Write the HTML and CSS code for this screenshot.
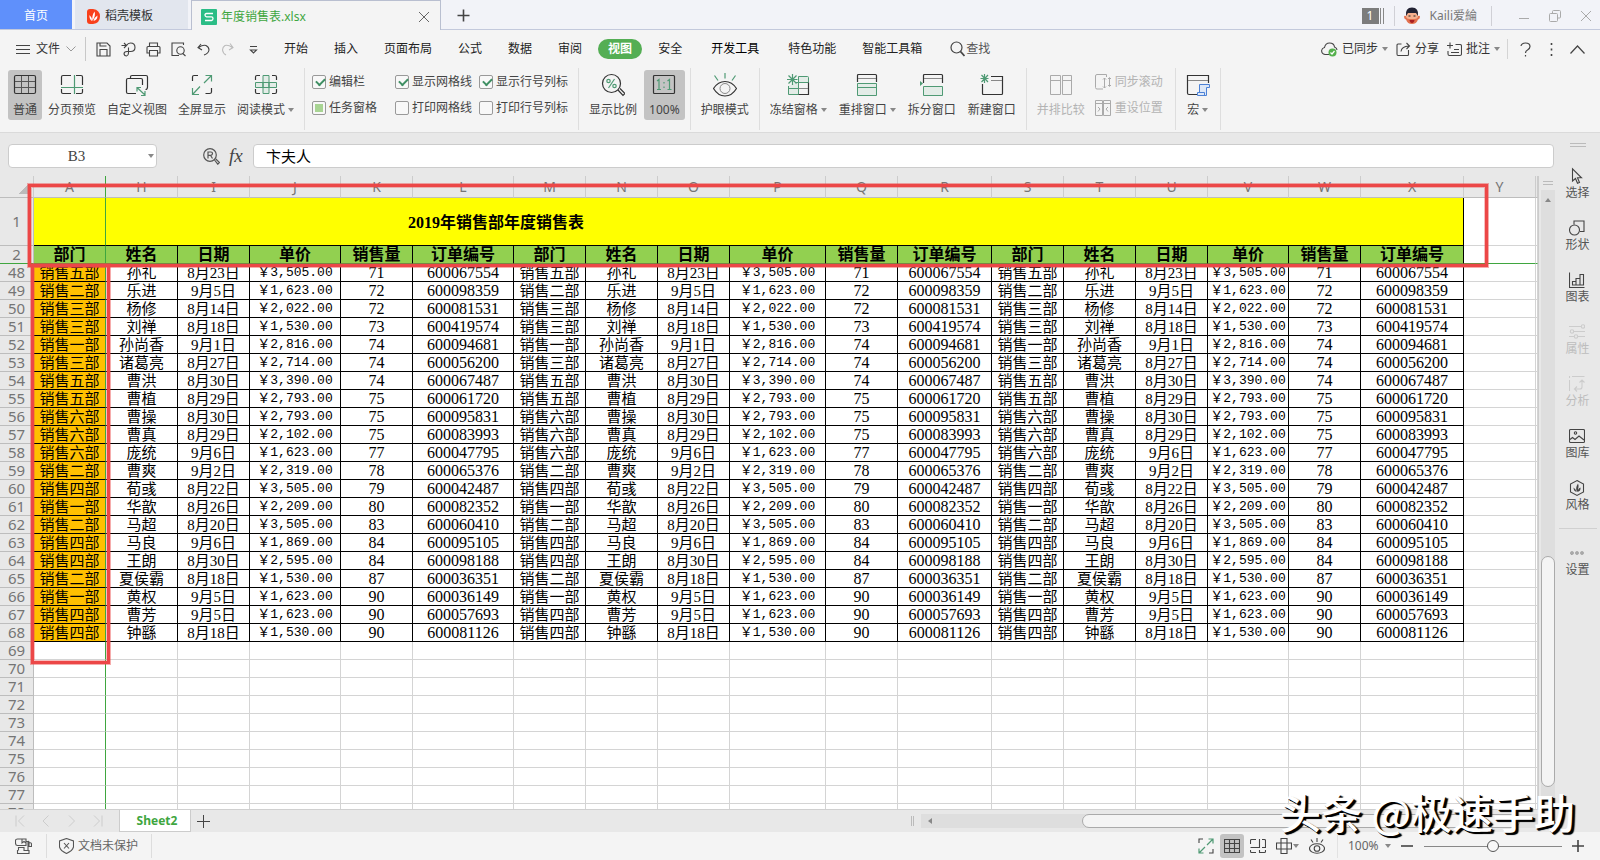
FILE: index.html
```html
<!DOCTYPE html>
<html lang="zh-CN">
<head>
<meta charset="utf-8">
<title>年度销售表.xlsx</title>
<link rel="stylesheet" href="styles.css">
</head>
<body>
<header class="tabbar">
  <button class="tab tab-home">首页</button>
  <button class="tab tab-template">
    <svg width="13" height="15" viewBox="0 0 13 15"><path d="M0 3Q0 0 3 0H6Q13 1 13 7.500Q13 14 6 15H3Q0 15 0 12Z" fill="#f9401b"/><path d="M7.500 2.500Q9 6 5.500 12Q4.500 7 7.500 2.500ZM2.500 6Q5 8 5 12Q2 10 2.500 6ZM10.500 6.500Q10.500 11 6.500 12Q7.500 8 10.500 6.500Z" fill="#fff"/></svg>
    稻壳模板</button>
  <div class="tab tab-active">
    <svg width="16" height="16" viewBox="0 0 16 16"><rect width="16" height="16" rx="1" fill="#2bbd86"/><path d="M12 4.500H5.500Q4 4.500 4 6T5.500 7.800H10.500Q12 7.800 12 9.500T10.500 11.500H4" fill="none" stroke="#fff" stroke-width="1.300"/></svg>
    <span>年度销售表.xlsx</span>
    <button class="tab-close" aria-label="关闭"><svg width="12" height="12" viewBox="0 0 12 12"><path d="M1 1L11 11M11 1L1 11" stroke="#666" fill="none"/></svg></button>
  </div>
  <button class="tab-new" aria-label="新建"><svg width="13" height="13" viewBox="0 0 13 13"><path d="M6.500 0.500V12.500M0.500 6.500H12.500" stroke="#444" stroke-width="1.600"/></svg></button>
  <div class="account">
    <span class="count">1</span><span class="count-lines"></span>
    <span class="vline"></span>
    <svg class="avatar" width="16" height="17" viewBox="0 0 16 17"><path d="M0 10Q0 8 2 9L14 9Q16 8 16 10Q15.500 12.500 14 12.500Q12.500 17 8 17Q3.500 17 2 12.500Q0.500 12.500 0 10Z" fill="#e2714f"/><path d="M2 5H14V10Q13 12 11 12H5Q3 12 2 10Z" fill="#f6b08e"/><path d="M2 9Q1 0.500 8 0.500Q15 0.500 14 9L12 6H4Z" fill="#223"/><path d="M4.500 9H6.500M9.500 9H11.500" stroke="#222"/><path d="M5.500 13H10.500Q10 16 8 16Q6 16 5.500 13Z" fill="#a81e22"/></svg>
    <span class="user">Kaili爱綸</span>
    <span class="vline"></span>
    <button class="win" aria-label="最小化"><svg width="12" height="12" viewBox="0 0 12 12"><path d="M1 8.500H11" stroke="#aaa"/></svg></button>
    <button class="win" aria-label="还原"><svg width="12" height="12" viewBox="0 0 12 12"><path d="M3.500 3.500V1.500Q3.500 0.500 4.500 0.500H10.500Q11.500 0.500 11.500 1.500V7Q11.500 8 10.500 8H8.500" fill="none" stroke="#aaa"/><rect x="0.500" y="3.500" width="8" height="8" rx="1" fill="none" stroke="#aaa"/></svg></button>
    <button class="win" aria-label="关闭窗口"><svg width="12" height="12" viewBox="0 0 12 12"><path d="M1 1L11 11M11 1L1 11" stroke="#aaa"/></svg></button>
  </div>
</header>

<nav class="menubar">
  <button class="file"><svg width="14" height="11" viewBox="0 0 14 11"><path d="M0 1.500H14M0 5.500H14M0 9.500H14" stroke="#444"/></svg>文件<svg width="10" height="6" viewBox="0 0 10 6"><path d="M0.500 0.500L5 5L9.500 0.500" fill="none" stroke="#999"/></svg></button>
  <div class="quick">
    <button aria-label="保存"><svg viewBox="0 0 15 15"><path d="M1 1H11L14 4V14H1ZM4 14V7.500H11V14M4 1V4H10.500" /></svg></button>
    <button aria-label="输出"><svg viewBox="0 0 15 15"><path d="M0.500 3.500H5M3 1L5.500 3.500L3 6M5.500 3.500Q7 1 9.500 1Q14 1 14 5.500Q14 9.500 9.500 9.500H6Q3 9.500 3 12Q3.500 14 5.500 14Q7.500 13.500 7.500 11V5.500"/></svg></button>
    <button aria-label="打印"><svg viewBox="0 0 15 15"><path d="M3.500 4V1H11.500V4M3.500 11H1V5.500Q1 4.500 2 4.500H13Q14 4.500 14 5.500V11H11.500M3.500 8.500H11.500V14H3.500Z"/></svg></button>
    <button aria-label="打印预览"><svg viewBox="0 0 15 15"><path d="M12.500 3V1H1V13.500H8M11.800 11.500L14.500 14"/><circle cx="9.500" cy="8.500" r="3.700"/></svg></button>
    <button aria-label="撤销"><svg viewBox="0 0 15 15"><path d="M5 2L2 5.500L6 8M2.500 5.500Q7 2.500 10 3.500Q13 5 13 8Q12.500 11.500 8 13"/></svg></button>
    <button class="dim" aria-label="恢复"><svg viewBox="0 0 15 15"><path d="M9 1.500L12 5.500L8 8M11.500 5.500Q7 2.500 4 3.500Q1.500 5 1.500 8Q2 11.500 5 13"/></svg></button>
    <button aria-label="更多"><svg viewBox="0 0 15 15"><path d="M4 4.500H11M4.500 8L7.500 11L10.500 8Z"/></svg></button>
  </div>
  <div class="menus">
    <button>开始</button><button>插入</button><button>页面布局</button><button>公式</button><button>数据</button><button>审阅</button><button class="current">视图</button><button>安全</button><button class="wide">开发工具</button><button>特色功能</button><button>智能工具箱</button>
  </div>
  <button class="find"><svg width="15" height="16" viewBox="0 0 15 16"><circle cx="6.500" cy="6.500" r="5.500" fill="none" stroke="#444" stroke-width="1.200"/><path d="M10.500 10.500L14.500 15" stroke="#444" stroke-width="1.800"/></svg>查找</button>
  <div class="share">
    <button><svg width="17" height="15" viewBox="0 0 17 15"><path d="M8 12.500H4Q0.600 12 0.600 8.500Q1 6 3.500 5.500Q4.500 1 8.500 1Q13 1 13.500 5Q16 6 16 8" fill="none" stroke="#444" stroke-width="1.100"/><circle cx="11.500" cy="10.500" r="4" fill="#54b04c"/><path d="M9.500 10.500L11 12L13.500 9" fill="none" stroke="#fff" stroke-width="1.200"/></svg>已同步<i class="caret"></i></button>
    <button><svg width="15" height="15" viewBox="0 0 15 15"><path d="M5.500 2H2Q1 2 1 3V12Q1 13.500 2 13.500H11.500Q12.500 13.500 12.500 12.500V8M5 9.500Q5.500 4.500 13 4M10.500 1L13.500 4L10.500 7" fill="none" stroke="#444" stroke-width="1.100"/></svg>分享</button>
    <button><svg width="15" height="15" viewBox="0 0 15 15"><path d="M0 3.500H6M3 0.500V6.500M8.500 2.500H13Q14.500 2.500 14.500 4V12Q14.500 13.500 13 13.500H2.500Q1 13.500 1 12V9M7 7.500H12M4 10.500H12" fill="none" stroke="#444" stroke-width="1.100"/></svg>批注<i class="caret"></i></button>
    <span class="bar"></span>
    <button class="help" aria-label="帮助"><svg width="11" height="15" viewBox="0 0 11 15"><path d="M1 4Q1.500 1 5.500 1Q10 1 10 4.500Q10 6.500 7.500 8Q5.500 9 5.500 11M5.500 13V14.500" fill="none" stroke="#444" stroke-width="1.200"/></svg></button>
    <button class="more" aria-label="更多选项"><svg width="3" height="13" viewBox="0 0 3 13"><path d="M1.500 0V2M1.500 5.500V7.500M1.500 11V13" stroke="#444" stroke-width="1.600"/></svg></button>
    <button class="fold" aria-label="折叠功能区"><svg width="15" height="9" viewBox="0 0 15 9"><path d="M0.500 8.500L7.500 1L14.500 8.500" fill="none" stroke="#444" stroke-width="1.200"/></svg></button>
  </div>
</nav>

<section class="ribbon">
  <div class="group first">
    <button class="tool on"><svg viewBox="0 0 24 24"><rect x="1.500" y="2.500" width="21" height="18" rx="1.500" class="k"/><path d="M2 8.500H22M2 14.500H22M8.500 3V20M15.500 3V20" stroke="#555" fill="none"/></svg><span>普通</span></button>
    <button class="tool"><svg viewBox="0 0 24 24"><path d="M1.500 12V4Q1.500 2.500 3 2.500H11M16 2.500H21Q22.500 2.500 22.500 4V12M1.500 16V19Q1.500 20.500 3 20.500H11M22.500 16V19Q22.500 20.500 21 20.500H16" class="k"/><path d="M14.500 2V21M1 14.500H23" class="g"/></svg><span>分页预览</span></button>
    <button class="tool"><svg viewBox="0 0 24 24"><path d="M5.500 5.500V4Q5.500 2.500 7 2.500H21Q22.500 2.500 22.500 4V14Q22.500 16.500 20.500 16.500M11 20.500H3Q1.500 20.500 1.500 19V7Q1.500 5.500 3 5.500H16Q17.500 5.500 17.500 7V12" class="k"/><path d="M12 14.500L20 22M12 18.500V14.500H16M20 18V22.500H16" class="g"/></svg><span>自定义视图</span></button>
    <button class="tool"><svg viewBox="0 0 24 24"><path d="M2.500 8V4Q2.500 2.500 4 2.500H8M15.500 20.500H19.500Q21.500 20.500 21.500 19V15" class="k"/><path d="M14 10L21 3M15.500 2.500H21.500V8.500M10 13.500L3 21M2.500 15V21.500H9" class="g"/></svg><span>全屏显示</span></button>
    <button class="tool"><svg viewBox="0 0 24 24"><path d="M1.500 7V4Q1.500 2.500 3 2.500H6M18 2.500H21Q22.500 2.500 22.500 4V7M1.500 16V19Q1.500 20.500 3 20.500H6M22.500 16V19Q22.500 20.500 21 20.500H18" class="k"/><path d="M9 2.500H15V20.500H9ZM1.500 9.500H22.500V14.500H1.500Z" fill="#e3ece7" stroke="#4f9a74"/><path d="M9 9.500V14.500M15 9.500V14.500" class="g"/></svg><span>阅读模式<i class="caret"></i></span></button>
  </div>
  <div class="group checks">
    <label><input type="checkbox" checked>编辑栏</label>
    <label><input type="checkbox" checked>显示网格线</label>
    <label><input type="checkbox" checked>显示行号列标</label>
    <label><input type="checkbox" class="partial">任务窗格</label>
    <label><input type="checkbox">打印网格线</label>
    <label><input type="checkbox">打印行号列标</label>
  </div>
  <div class="group">
    <button class="tool"><svg viewBox="0 0 24 24"><circle cx="10.500" cy="10.500" r="9" class="k"/><path d="M17 17L22 22.500L24 20.500L19 15.500" class="k"/><path d="M13.500 6L7.500 15" class="g"/><circle cx="7.500" cy="8" r="1.700" class="g"/><circle cx="13.500" cy="13" r="1.700" class="g"/></svg><span>显示比例</span></button>
    <button class="tool on"><svg viewBox="0 0 24 24"><rect x="1.500" y="2.500" width="21" height="18" rx="1" class="k"/><path d="M5 8L7 6.500V16.500M5 16.500H9M15.500 8L17.500 6.500V16.500M15.500 16.500H19.500M12 9V10.500M12 13.500V15" class="g"/></svg><span>100%</span></button>
  </div>
  <div class="group">
    <button class="tool"><svg viewBox="0 0 24 24"><path d="M0.500 15.500Q5 8.500 12 8.500T23.500 15.500Q19 23 12 23T0.500 15.500Z" class="k"/><circle cx="12" cy="15.500" r="5" fill="none" stroke="#888"/><path d="M1.500 2.500L5 7.500M12 0V5.500M22.500 2.500L19 7.500" class="g"/></svg><span>护眼模式</span></button>
  </div>
  <div class="group">
    <button class="tool"><svg viewBox="0 0 24 24"><path d="M2.500 13V21.500H12.500V9.500H22.500V4.500Q22.500 3.500 21.500 3.500H12.500V9.500H10" fill="#e3ece7" stroke="#4f9a74"/><path d="M22.500 9.500V21.500H12.500" class="k"/><path d="M12.500 15.500H22" stroke="#888"/><path d="M2.500 15.500H12.500M1 6.500H11.500M6.500 1V12M2.500 2.500L10.500 10.500M10.500 2.500L2.500 10.500" class="g"/></svg><span>冻结窗格<i class="caret"></i></span></button>
    <button class="tool"><svg viewBox="0 0 24 24"><path d="M2.500 9V2.500Q2.500 1.500 3.500 1.500H20.500Q21.500 1.500 21.500 2.500V9" class="k"/><path d="M3 5.500H21" stroke="#888"/><path d="M2.500 10.500H21.500V22.500H2.500ZM2.500 14.500H21.500" fill="#e3ece7" stroke="#4f9a74"/></svg><span>重排窗口<i class="caret"></i></span></button>
    <button class="tool"><svg viewBox="0 0 24 24"><path d="M3.500 10V2.500Q3.500 1.500 4.500 1.500H21.500Q22.500 1.500 22.500 2.500V10" class="k"/><path d="M4 5.500H22" stroke="#888"/><path d="M3.500 13.500H22.500V22.500H3.500Z" fill="#e3ece7" stroke="#4f9a74"/><path d="M0 8L3 10.500L0 13Z" fill="#4f9a74"/></svg><span>拆分窗口</span></button>
    <button class="tool"><svg viewBox="0 0 24 24"><path d="M11 3.500H22.500V20.500Q22.500 21.500 21.500 21.500H3.500Q2.500 21.500 2.500 20.500V11" class="k"/><path d="M11 7.500H22" stroke="#888"/><path d="M0.500 5.500H8.500M4.500 1V10M1.500 2L8 9M8 2L1.500 9" class="g"/></svg><span>新建窗口</span></button>
  </div>
  <div class="group off">
    <button class="tool" disabled><svg viewBox="0 0 24 24"><path d="M1.500 2.500H11.500V21.500H1.500ZM13.500 2.500H22.500V21.500H13.500ZM2 7.500H11M14 7.500H22" fill="none" stroke="#aaa"/></svg><span>并排比较</span></button>
    <div class="pair">
      <button disabled><svg width="16" height="16" viewBox="0 0 16 16"><path d="M8 15H2Q0.500 15 0.500 13.500V2Q0.500 0.500 2 0.500H11.500V3M9.500 4V14M8 5.500L9.500 4L11 5.500M8 12.500L9.500 14L11 12.500M14.500 4V12M13 5L14.500 3.500L16 5M13 11L14.500 12.500L16 11" fill="none" stroke="#aaa"/></svg>同步滚动</button>
      <button disabled><svg width="16" height="16" viewBox="0 0 16 16"><path d="M0.500 0.500H7.500V15.500H0.500ZM8.500 0.500H15.500V15.500H8.500ZM1 3.500H15M3 7L5 9L3 11.500M13 7L11 9L13 11.500" fill="none" stroke="#aaa"/></svg>重设位置</button>
    </div>
  </div>
  <div class="group">
    <button class="tool"><svg viewBox="0 0 24 24"><path d="M11 21.500H3Q1.500 21.500 1.500 20V2.500H22.500V10" class="k"/><path d="M2 7.500H22" stroke="#888"/><path d="M13.500 19V11.500H23.500V14.500H20.500V22.500H11.500V19.500H18.500V22.500" fill="#dde8f8" stroke="#4d82d6"/></svg><span>宏<i class="caret"></i></span></button>
  </div>
</section>

<div class="work">
  <main class="editor">
    <div class="formula">
      <div class="namebox"><input type="text" value="B3" aria-label="名称框"><button aria-label="名称列表"><i class="caret"></i></button></div>
      <button class="lookup" aria-label="查找函数"><svg width="17" height="17" viewBox="0 0 17 17"><circle cx="7" cy="7" r="6.300"/><path d="M5 10.500V4H8Q9.500 4 9.500 5.500T8 7.300H5M7.500 7.300L9.500 10.500M11.500 12L14.800 16.200L16.500 14.500L12.800 11"/></svg></button>
      <button class="fx" aria-label="插入函数">fx</button>
      <input class="content" type="text" value="卞夫人" aria-label="编辑栏">
    </div>
    <div class="panes">
      <div class="sheet">
        <table>
          <colgroup>
            <col class="w34"><col class="w72"><col class="w72"><col class="w72"><col class="w91"><col class="w72"><col class="w101"><col class="w72"><col class="w72"><col class="w72"><col class="w96"><col class="w72"><col class="w94"><col class="w72"><col class="w72"><col class="w72"><col class="w81"><col class="w72"><col class="w103"><col class="w72"><col>
          </colgroup>
          <thead>
            <tr class="letters" id="letters"><th class="corner"></th></tr>
          </thead>
          <tbody id="rows">
            <tr class="title"><th>1</th><td class="split"></td><td class="name" colspan="17">2019年销售部年度销售表</td><td></td><td></td></tr>
            <tr class="fields" id="fields"><th>2</th></tr>
          </tbody>
        </table>
      </div>
      <div class="vscroll"><span class="grip"></span><div class="track"><i class="up"></i><div class="thumb"></div></div></div>
    </div>
    <div class="sheetbar">
      <div class="steps">
        <button aria-label="第一个"><svg viewBox="0 0 12 12"><path d="M2 0.500V11.500M10 0.500L4.500 6L10 11.500"/></svg></button>
        <button aria-label="上一个"><svg viewBox="0 0 12 12"><path d="M8.500 0.500L3 6L8.500 11.500"/></svg></button>
        <button aria-label="下一个"><svg viewBox="0 0 12 12"><path d="M3 0.500L8.500 6L3 11.500"/></svg></button>
        <button aria-label="最后一个"><svg viewBox="0 0 12 12"><path d="M10 0.500V11.500M2 0.500L7.500 6L2 11.500"/></svg></button>
      </div>
      <button class="sheet-tab">Sheet2</button>
      <button class="add" aria-label="新建工作表"><svg width="13" height="13" viewBox="0 0 13 13"><path d="M6.500 0V13M0 6.500H13" stroke="#444"/></svg></button>
      <div class="hscroll"><span class="hgrip"></span><div class="htrack"><i class="left"></i><div class="hthumb"></div></div></div>
    </div>
  </main>
  <aside class="side">
    <span class="grip"></span>
    <button><svg viewBox="0 0 16 16"><path d="M3.500 0.800V13L6.500 10.500L8.500 15.300L10.500 14.500L8.500 9.800H12.500Z"/></svg>选择</button>
    <button><svg viewBox="0 0 16 16"><circle cx="5.500" cy="10" r="5"/><path d="M5 4.500V1H15V11.500H11"/></svg>形状</button>
    <button><svg viewBox="0 0 16 16"><path d="M0.500 0.500V15.500H15.500M3.500 13V9.500H7V13ZM7 13V6.500H11V13M11 13V2.500H14.500V13H3.500"/></svg>图表</button>
    <button class="dim"><svg viewBox="0 0 16 16"><path d="M0 2.500H12M5 7.500H16M0 12.500H5M9 12.500H16"/><circle cx="14" cy="2.500" r="1.700"/><circle cx="3" cy="7.500" r="1.700"/><circle cx="7" cy="12.500" r="1.700"/></svg>属性</button>
    <button class="dim"><svg viewBox="0 0 16 16"><path d="M0.500 0V2M3 0.500H15.500M0.500 4V15M6 13H11Q13 13 13 11V4M10.500 6.500L13 4L15.500 6.500M8 10.500L5.500 13L8 15.500"/></svg>分析</button>
    <button><svg viewBox="0 0 16 16"><rect x="0.500" y="1.500" width="15" height="13" rx="1"/><circle cx="6.500" cy="5" r="1.200"/><path d="M1 11.500L3.500 9.500L6 11.500L10 8L15 12"/></svg>图库</button>
    <button><svg viewBox="0 0 16 16"><path d="M8 0.600L14.500 4V12L8 15.400L1.500 12V4Z"/><path d="M9 3.500Q10.500 7 8 12Q6 8 9 3.500ZM4.500 7.500Q7 9 7.500 12Q4.500 11 4.500 7.500ZM11.500 7.500Q12 11 8.500 12Q8.500 9 11.500 7.500Z" class="solid"/></svg>风格</button>
    <hr>
    <button class="dots"><svg viewBox="0 0 16 16"><circle cx="3" cy="8" r="1.200"/><circle cx="8" cy="8" r="1.200"/><circle cx="13" cy="8" r="1.200"/></svg>设置</button>
  </aside>
</div>

<footer class="status">
  <button class="macro" aria-label="录制"><svg width="17" height="17" viewBox="0 0 17 17"><path d="M2.500 7.500Q0.500 7.500 0.500 5V2.500Q0.500 1 2.500 1H11V7.500ZM7 1V5L9 3.500L11 5M11 3.500H13.500M2.500 12V15.500H14V12.500H9V9.500H3.500V12.500M14 5Q16.500 4 16.500 6.500V8.500H14V4Q14 3 13 3.500V12.500"/></svg></button>
  <button class="guard"><svg width="15" height="16" viewBox="0 0 15 16"><path d="M7.500 0.500L14.500 3V9Q13.500 13 7.500 15.500Q1.500 13 0.500 9V3ZM5 5L10 10.500M10 5L5 10.500"/></svg>文档未保护</button>
  <div class="views">
    <button aria-label="全屏"><svg viewBox="0 0 16 16"><path d="M1 5V1H5M11 15H15V11"/><path d="M9 7L15 1M10.500 1H15V5.500M7 9L1 15M1 10.500V15H5.500" class="g"/></svg></button>
    <button class="on" aria-label="普通视图"><svg viewBox="0 0 16 16"><path d="M0.500 1.500H15.500V14.500H0.500ZM0.500 5.500H15.500M0.500 10.500H15.500M5.500 1.500V14.500M10.500 1.500V14.500"/></svg></button>
    <button aria-label="分页预览视图"><svg viewBox="0 0 16 16"><path d="M0.500 6V2.500Q0.500 1.500 1.500 1.500H6M9.500 1V9.500H0.500M12 1.500H14.500Q15.500 1.500 15.500 2.500V9.500H12M0.500 12V13.500Q0.500 14.500 1.500 14.500H6M9.500 12V14.500H14.500Q15.500 14.500 15.500 13.500V12"/></svg></button>
    <button aria-label="阅读模式"><svg viewBox="0 0 16 16"><path d="M5 0.500H11V15.500H5ZM0.500 5H15.500V11H0.500Z"/></svg><i class="caret"></i></button>
    <button aria-label="护眼模式"><svg viewBox="0 0 16 16"><ellipse cx="8" cy="10.500" rx="7.500" ry="4.800"/><circle cx="8" cy="10.500" r="2.800"/><path d="M8 0V4M2 1.500L4 4.500M14 1.500L12 4.500"/></svg></button>
  </div>
  <div class="zoom">
    <select aria-label="显示比例"><option>100%</option></select><i class="caret"></i>
    <button aria-label="缩小"><svg width="12" height="12" viewBox="0 0 12 12"><path d="M0 6H12" stroke="#444" stroke-width="1.600"/></svg></button>
    <input type="range" min="0" max="100" value="50" aria-label="缩放">
    <button aria-label="放大"><svg width="12" height="12" viewBox="0 0 12 12"><path d="M0 6H12M6 0V12" stroke="#444" stroke-width="1.600"/></svg></button>
  </div>
</footer>

<div class="frame frame-rows"></div>
<div class="frame frame-column"></div>
<div class="watermark">头条 @极速手助</div>
<script src="script.js"></script>
</body>
</html>
```
FILE: styles.css
```css
* { box-sizing: border-box; }
body {
  margin: 0;
  height: 100vh;
  display: flex;
  flex-direction: column;
  overflow: hidden;
  position: relative;
  background: #f4f4f4;
  color: #333;
  font: 12px/16px "Noto Sans", "Noto Sans CJK SC", sans-serif;
}
button, input, select { font: inherit; color: inherit; }
button { border: 0; padding: 0; background: none; display: flex; align-items: center; white-space: nowrap; }
svg { flex: none; display: block; }
.caret { flex: none; width: 0; height: 0; border: 3px solid transparent; border-top: 4px solid #888; border-bottom: 0; }

/* document tabs */
.tabbar { height: 30px; flex: none; display: flex; background: #f2f3f8; border-bottom: 1px solid #c3c9dc; }
.tab-home { width: 72px; justify-content: center; background: #5f90fb; color: #fff; margin-right: 3px; padding-top: 3px; }
.tab-template { width: 113px; background: #e2e6ee; padding: 3px 0 0 12px; gap: 5px; margin-right: 3px; }
.tab-active { width: 250px; height: 30px; display: flex; align-items: center; padding: 3px 10px 0 9px; gap: 4px; background: #f4f4f4; border: 1px solid #b9bfd0; border-bottom: 0; color: #3fa63f; }
.tab-close { margin-left: auto; }
.tab-new { margin-left: 16px; padding-top: 2px; }
.account { margin-left: auto; display: flex; align-items: center; padding: 2px 8px 0 0; color: #777; }
.count { width: 17px; height: 16px; background: #7c7c7c; color: #fff; text-align: center; }
.count-lines { width: 4px; height: 16px; border: solid #888; border-width: 0 1px; margin: 0 10px 0 1px; }
.vline { width: 1px; height: 20px; background: #d0d0d6; }
.avatar { margin: 0 10px 0 9px; }
.user { margin-right: 14px; }
.vline + .win { margin-left: 26px; }
.win + .win { margin-left: 19px; }

/* menu row */
.menubar { height: 36px; flex: none; display: flex; align-items: center; padding: 2px 15px 0 16px; }
.file { gap: 6px; height: 24px; padding-right: 9px; border-right: 1px solid #c8c8c8; }
.quick { display: flex; gap: 10px; margin-left: 10px; }
.quick svg { width: 15px; height: 15px; fill: none; stroke: #444; stroke-width: 1.1; }
.quick .dim svg { stroke: #bbb; }
.menus { display: flex; align-items: center; gap: 26px; margin-left: 23px; color: #222; }
.menus .current { height: 20px; padding: 0 10px; margin: 0 -10px; border-radius: 10px; background: #54ae54; color: #fff; font-weight: 700; }
.menus .wide { padding: 0 3px; color: #000; }
.find { margin-left: 28px; gap: 1px; color: #555; }
.share { margin-left: auto; display: flex; align-items: center; gap: 8px; }
.share button { gap: 4px; }
.bar { width: 1px; height: 20px; background: #d4d4d4; margin: 0 4px 0 -1px; }
.help { margin-right: 11px; }
.more { margin-right: 9px; }

/* ribbon */
.ribbon { height: 67px; flex: none; display: flex; padding: 2px 0; border-bottom: 1px solid #dadada; }
.group { display: flex; align-items: flex-start; padding: 2px 5px 0; border-right: 1px solid #dedede; }
.group.first { padding-left: 8px; gap: 1px; }
.group:nth-child(n+3) { gap: 2px; }
.tool { height: 50px; padding: 3px 5px 0; flex-direction: column; border-radius: 3px; color: #444; gap: 4px; }
.tool svg { width: 24px; height: 24px; fill: none; }
.tool span { display: flex; align-items: center; gap: 3px; height: 18px; }
.tool.on { background: #c3c3c3; }
.k { fill: none; stroke: #333; stroke-width: 1.2; }
.g { fill: none; stroke: #4f9a74; stroke-width: 1.2; }
.checks { display: grid; grid-template-columns: 83px 84px 94px; grid-auto-rows: 26px; padding: 1px 5px 0 7px; align-content: center; }
.checks label { display: flex; align-items: center; gap: 3px; color: #444; white-space: nowrap; }
.checks input { appearance: none; position: relative; flex: none; width: 14px; height: 14px; margin: 0; border: 1px solid #999; border-radius: 2px; background: #f8f8f8; }
.checks input:checked::after { content: ""; position: absolute; left: 3px; top: 2px; width: 7px; height: 4px; border: solid #3f8f63; border-width: 0 0 2px 2px; transform: rotate(-45deg); }
.checks { align-content: start; padding-top: 6px; }
.checks .partial::after { content: ""; position: absolute; left: 2px; top: 2px; width: 8px; height: 8px; background: #a8d493; }
.off button { color: #b3b3b3; }
.pair { display: flex; flex-direction: column; gap: 10px; padding: 4px 7px 0 3px; }
.pair button { gap: 4px; }

/* work area */
.work { flex: 1; min-height: 0; display: flex; background: #e8e8e8; }
.editor { flex: 1; min-width: 0; display: flex; flex-direction: column; }
.formula { flex: none; height: 43px; display: flex; align-items: center; padding: 3px 1px 0 8px; }
.namebox { width: 149px; height: 24px; display: flex; align-items: center; background: #fff; border: 1px solid #ccc; border-radius: 4px; padding-right: 2px; }
.namebox input { flex: 1; min-width: 0; border: 0; background: none; text-align: center; font-family: "Liberation Serif", serif; font-size: 15px; color: #444; padding: 0 4px 0 0; }
.lookup { margin: 0 9px 0 46px; }
.lookup svg { fill: none; stroke: #555; stroke-width: 1.2; }
.fx { font: italic 19px/20px "Liberation Serif", serif; color: #444; width: 24px; }
.content { flex: 1; min-width: 0; height: 24px; border: 1px solid #ccc; border-radius: 4px; background: #fff; padding: 0 12px 2px; font-size: 15px; color: #000; }
.panes { flex: 1; min-height: 0; display: flex; }
.sheet { flex: 1; min-width: 0; overflow: hidden; border-bottom: 1px solid #d0d0d0; }
.vscroll { flex: none; width: 17px; border-left: 1px solid #ccc; padding: 0 0 0 2px; display: flex; flex-direction: column; }
.grip { width: 10px; height: 4px; border: solid #bbb; border-width: 1px 0; margin: 5px 2px; flex: none; }
.track { flex: 1; background: #dedede; position: relative; }
.up { position: absolute; left: 4px; top: 8px; border: 3px solid transparent; border-top: 0; border-bottom: 4px solid #888; }
.thumb { position: absolute; left: 0; right: 0; top: 59%; bottom: 23px; background: #f4f4f4; border: 1px solid #aaa; border-radius: 7px; }

/* cells */
table { table-layout: fixed; width: 100%; border-collapse: separate; border-spacing: 0; background: #fff; }
.w34 { width: 34px; } .w72 { width: 72px; } .w81 { width: 81px; } .w91 { width: 91px; } .w94 { width: 94px; }
.w96 { width: 96px; } .w101 { width: 101px; } .w103 { width: 103px; }
th { background: #e8e8e8; color: #757575; font-weight: 400; font-size: 15px; padding: 0; border: solid #bdbdbd; border-width: 0 1px 1px 0; line-height: 17px; }
.letters th { height: 22px; font-size: 14px; border-right-color: #ccc; }
.letters .corner { background: linear-gradient(135deg, transparent 50%, #bbb 50%) 18px 8px / 10px 10px no-repeat #e8e8e8; }
td { height: 18px; padding: 1px 0 0; border: solid #d4d4d4; border-width: 0 1px 1px 0; text-align: center; white-space: nowrap; line-height: 16px; font-family: "Liberation Serif", "Noto Sans CJK SC", serif; font-size: 15px; color: #000; }
td.num { font-size: 16px; }
td.price { font-family: "Liberation Mono", "Noto Sans CJK SC", monospace; font-size: 13px; }
.data td.cell { border-color: #000; }
.data td.dept { background: #ffc000; }
.title td { height: 48px; }
.title td.split, .title td.name { background: #ff0; border-bottom-color: #000; }
.title td.name { border-right-color: #000; text-align: left; padding: 2px 0 0 302px; font-size: 16px; font-weight: 700; }
.fields td.cell { background: #92d050; border-color: #000; font-size: 16px; font-weight: 700; }
.fields th, .fields td, .fields td.cell { border-bottom-color: #3fa63f; }
.letters th.split, .title td.split, .fields td.split, .data td.split { border-right-color: #3fa63f; }

/* sheet tabs */
.sheetbar { flex: none; height: 22px; display: flex; align-items: center; }
.steps { width: 119px; display: flex; gap: 14px; padding: 0 14px; }
.steps svg { width: 12px; height: 12px; fill: none; stroke: #ccc; }
.sheet-tab { width: 72px; height: 22px; justify-content: center; background: #fff; border: 1px solid #ccc; border-top: 0; color: #3fa63f; font-weight: 700; padding-left: 4px; }
.add { margin-left: 6px; }
.hscroll { margin-left: auto; width: 41.4%; display: flex; align-items: center; gap: 7px; padding-right: 17px; }
.hgrip { width: 3px; height: 10px; border: solid #bbb; border-width: 0 1px; }
.htrack { flex: 1; height: 14px; background: #dedede; position: relative; }
.left { position: absolute; left: 7px; top: 4px; border: 3px solid transparent; border-left: 0; border-right: 4px solid #888; }
.hthumb { position: absolute; left: 26%; right: 18px; top: 0; bottom: 0; background: #f4f4f4; border: 1px solid #aaa; border-radius: 7px; }

/* task pane */
.side { flex: none; width: 45px; display: flex; flex-direction: column; align-items: center; padding: 10px 0 0; color: #555; }
.side .grip { width: 16px; margin: 0 0 20px; }
.side button { height: 52px; flex-direction: column; justify-content: flex-start; }
.side svg { width: 16px; height: 18px; fill: none; stroke: #444; stroke-width: 1.1; }
.side .solid { fill: #444; stroke: none; }
.side .dim { color: #bdbdbd; }
.side .dim svg { stroke: #ccc; }
.side .dots svg { stroke: #888; }
.side hr { width: 38px; border: 0; border-top: 1px solid #d0d0d0; margin: -3px 0 15px; }

/* status bar */
.status { flex: none; height: 28px; display: flex; align-items: center; padding: 0 16px 0 15px; background: #f4f4f4; color: #666; }
.macro { padding-right: 14px; height: 24px; border-right: 1px solid #ddd; }
.guard { gap: 4px; height: 24px; padding: 0 13px 0 12px; border-right: 1px solid #ddd; }
.macro svg, .guard svg { fill: none; stroke: #555; stroke-width: 1.1; }
.views { margin-left: auto; display: flex; gap: 2px; padding-right: 8px; border-right: 1px solid #e2e2e2; }
.views button { height: 24px; padding: 0 4px; gap: 1px; border-radius: 3px; }
.views .on { background: #c3c3c3; }
.views svg { width: 16px; height: 16px; fill: none; stroke: #444; stroke-width: 1.1; }
.views svg .g { stroke: #4f9a74; }
.zoom { display: flex; align-items: center; padding-left: 10px; }
.zoom select { appearance: none; border: 0; background: none; padding: 0; width: 34px; margin-right: 3px; }
.zoom button { margin: 0 0 0 10px; }
.zoom input { appearance: none; width: 138px; height: 14px; margin: 0 0 0 11px; background: linear-gradient(#888, #888) center / 100% 1px no-repeat; }
.zoom input::-webkit-slider-thumb { appearance: none; width: 12px; height: 12px; border: 1px solid #555; border-radius: 50%; background: #f8f8f8; }

/* highlight frames and caption laid over the window */
.frame { position: absolute; border: 3px solid #ec4747; box-shadow: 0 0 0 1px rgba(236, 71, 71, .45), inset 0 0 0 1px rgba(236, 71, 71, .35); }
.frame-rows { left: 28px; top: 184px; width: 1460px; height: 83px; }
.frame-column { left: 31px; top: 264px; width: 79px; height: 400px; }
.watermark { position: absolute; right: 25px; bottom: 25px; font: 500 41px/48px "Noto Sans CJK SC", sans-serif; color: #fff; text-shadow: 1px 1px 0 #000, 2px 2px 0 #000, 3px 2px 1px #000; white-space: nowrap; }
```
FILE: script.js
```js
const people = [
  ["销售五部", "孙礼", "8月23日", "3,505.00", "71", "600067554"],
  ["销售二部", "乐进", "9月5日", "1,623.00", "72", "600098359"],
  ["销售三部", "杨修", "8月14日", "2,022.00", "72", "600081531"],
  ["销售三部", "刘禅", "8月18日", "1,530.00", "73", "600419574"],
  ["销售一部", "孙尚香", "9月1日", "2,816.00", "74", "600094681"],
  ["销售三部", "诸葛亮", "8月27日", "2,714.00", "74", "600056200"],
  ["销售五部", "曹洪", "8月30日", "3,390.00", "74", "600067487"],
  ["销售五部", "曹植", "8月29日", "2,793.00", "75", "600061720"],
  ["销售六部", "曹操", "8月30日", "2,793.00", "75", "600095831"],
  ["销售六部", "曹真", "8月29日", "2,102.00", "75", "600083993"],
  ["销售六部", "庞统", "9月6日", "1,623.00", "77", "600047795"],
  ["销售二部", "曹爽", "9月2日", "2,319.00", "78", "600065376"],
  ["销售四部", "荀彧", "8月22日", "3,505.00", "79", "600042487"],
  ["销售一部", "华歆", "8月26日", "2,209.00", "80", "600082352"],
  ["销售二部", "马超", "8月20日", "3,505.00", "83", "600060410"],
  ["销售四部", "马良", "9月6日", "1,869.00", "84", "600095105"],
  ["销售四部", "王朗", "8月30日", "2,595.00", "84", "600098188"],
  ["销售二部", "夏侯霸", "8月18日", "1,530.00", "87", "600036351"],
  ["销售一部", "黄权", "9月5日", "1,623.00", "90", "600036149"],
  ["销售四部", "曹芳", "9月5日", "1,623.00", "90", "600057693"],
  ["销售四部", "钟繇", "8月18日", "1,530.00", "90", "600081126"]
];
const fields = ["部门", "姓名", "日期", "单价", "销售量", "订单编号"];
const kinds = ["", "", "", "price", "num", "num"];
const FIRST_ROW = 48;
const LAST_ROW = 78;
const COLUMNS = 18;

function add(row, tag, text, classes) {
  const cell = document.createElement(tag);
  cell.textContent = text;
  cell.className = classes.filter(Boolean).join(" ");
  row.appendChild(cell);
}

const letters = document.getElementById("letters");
[..."AHIJKLMNOPQRSTUVWXY", ""].forEach((c, i) => add(letters, "th", c, [i === 0 && "split"]));

const head = document.getElementById("fields");
for (let c = 0; c < COLUMNS; c++) add(head, "td", fields[c % 6], ["cell", c === 0 && "split"]);
add(head, "td", "", []);
add(head, "td", "", []);

const body = document.getElementById("rows");
for (let n = FIRST_ROW; n <= LAST_ROW; n++) {
  const row = document.createElement("tr");
  const person = people[n - FIRST_ROW];
  row.className = "data";
  add(row, "th", n, []);
  for (let c = 0; c < COLUMNS; c++) {
    const k = c % 6;
    const text = person ? (k === 3 ? "￥" : "") + person[k] : "";
    add(row, "td", text, [person && "cell", person && kinds[k], c === 0 && "split", c === 0 && person && "dept"]);
  }
  add(row, "td", "", []);
  add(row, "td", "", []);
  body.appendChild(row);
}
```
